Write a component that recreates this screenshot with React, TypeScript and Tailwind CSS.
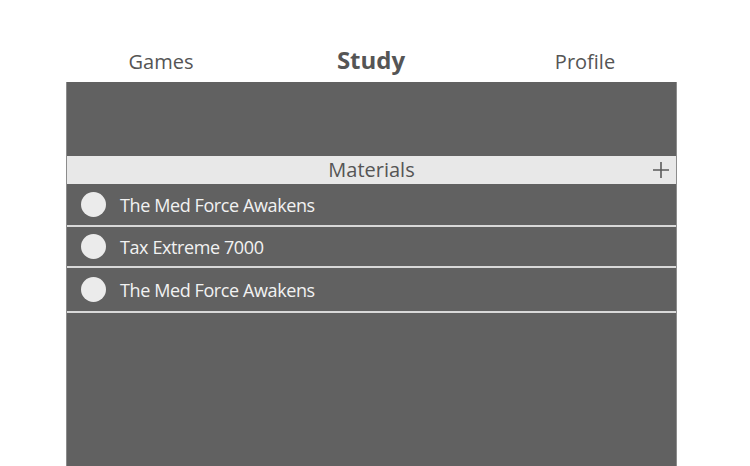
import React from "react";

const MATERIALS = [
  { title: "The Med Force Awakens", h: "h-[43px]" },
  { title: "Tax Extreme 7000", h: "h-[41px]" },
  { title: "The Med Force Awakens", h: "h-[45px]" },
];

const App = () => {
  return (
    <div className="h-[466px] w-[750px] overflow-hidden bg-white font-['Open_Sans',sans-serif]">
      <div className="ml-[66px] grid h-[82px] grid-cols-[190px_230px_198px] items-end pb-[8px] text-[#555555]">
        <div className="text-center text-[20px] leading-[24px]">Games</div>
        <div className="text-center text-[24px] font-bold leading-[28px]">Study</div>
        <div className="text-center text-[20px] leading-[24px]">Profile</div>
      </div>
      <div className="ml-[66px] flex h-[400px] w-[611px] flex-col border-x border-[#8c8c8c] bg-[#616161]">
        <div className="h-[74px]" />
        <div className="relative flex h-[28px] items-center justify-center bg-[#e8e8e8]">
          <span className="text-[20px] leading-[24px] text-[#555555]">Materials</span>
          <svg className="absolute right-[7px] top-[6px]" width="16" height="16" viewBox="0 0 16 16">
            <path d="M8 0v16M0 8h16" stroke="#5a5a5a" strokeWidth="1.6" />
          </svg>
        </div>
        {MATERIALS.map((item, i) => (
          <div key={i} className={`flex ${item.h} items-center border-b-2 border-[#d9d9d9]`}>
            <div className="ml-[14px] h-[25px] w-[25px] rounded-full bg-[#ebebeb]" />
            <span className="ml-[14px] text-[18px] leading-[22px] tracking-[-0.4px] text-[#f2f2f2]">
              {item.title}
            </span>
          </div>
        ))}
      </div>
    </div>
  );
};

export default App;
